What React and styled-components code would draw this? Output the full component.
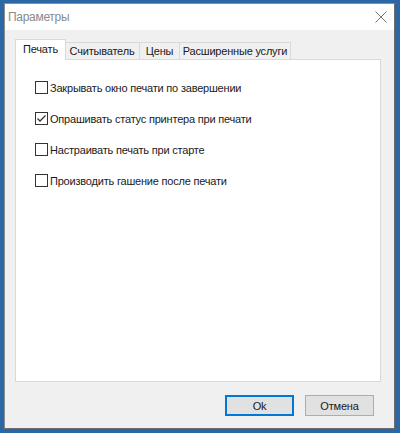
import React from "react";
import styled, { createGlobalStyle } from "styled-components";

const Global = createGlobalStyle`
  html, body {
    margin: 0;
    padding: 0;
    background: #2b67a4;
    font-family: "Liberation Sans", Arial, sans-serif;
  }
`;

const Desktop = styled.div`
  width: 400px;
  height: 433px;
  padding: 3px 5px 4px 4px;
  box-sizing: border-box;
`;

const Window = styled.div`
  height: 100%;
  display: flex;
  flex-direction: column;
  background: #f0f0f0;
  border: 1px solid #8c8c8c;
  border-right-color: #6d6d6d;
  border-bottom-color: #6d6d6d;
  box-sizing: border-box;
`;

const TitleBar = styled.div`
  height: 26px;
  flex: none;
  background: #fff;
  display: flex;
  align-items: center;
  justify-content: space-between;
  padding: 0 7px 0 3px;
`;

const Title = styled.span`
  font-size: 12px;
  letter-spacing: -0.3px;
  color: #8a8a8a;
`;

const Body = styled.div`
  flex: 1;
  display: flex;
  flex-direction: column;
  padding: 10px 13px 0 10px;
`;

const TabRow = styled.div`
  display: flex;
  align-items: flex-end;
  height: 20px;
  position: relative;
  z-index: 1;
`;

const Tab = styled.div`
  box-sizing: border-box;
  height: ${(p) => (p.active ? "21px" : "18px")};
  width: ${(p) => p.w}px;
  margin: ${(p) => (p.active ? "0 -1px 0 0" : "0 0 0 -1px")};
  background: ${(p) => (p.active ? "#fff" : "#f0f0f0")};
  border: 1px solid #d9d9d9;
  border-bottom: ${(p) => (p.active ? "none" : "1px solid #d9d9d9")};
  font-size: 11px;
  letter-spacing: -0.2px;
  color: #1a1a1a;
  display: flex;
  align-items: center;
  justify-content: center;
  padding-bottom: ${(p) => (p.active ? "2px" : "0")};
  white-space: nowrap;
  &:first-child {
    margin-left: 0;
    position: relative;
    z-index: 2;
  }
`;

const Panel = styled.div`
  height: 323px;
  margin-top: -1px;
  background: #fff;
  border: 1px solid #d9d9d9;
  display: flex;
  flex-direction: column;
  gap: 14px;
  padding: 19px 0 0 19px;
  box-sizing: border-box;
`;

const Row = styled.label`
  display: flex;
  align-items: center;
  gap: 2px;
  height: 17px;
  font-size: 11px;
  letter-spacing: -0.2px;
  color: #1a1a1a;
  white-space: nowrap;
`;

const Box = styled.span`
  width: 13px;
  height: 13px;
  box-sizing: border-box;
  border: 1px solid #333;
  background: #fff;
  display: flex;
  align-items: center;
  justify-content: center;
`;

const Footer = styled.div`
  display: flex;
  justify-content: flex-end;
  gap: 11px;
  padding: 13px 7px 0 0;
`;

const Button = styled.button`
  width: 69px;
  height: 21px;
  box-sizing: border-box;
  background: #e1e1e1;
  border: ${(p) => (p.primary ? "2px solid #0078d7" : "1px solid #adadad")};
  font-family: inherit;
  font-size: 11px;
  letter-spacing: -0.2px;
  color: #1a1a1a;
  padding: 0;
`;

const CheckBox = ({ checked }) => (
  <Box>
    {checked && (
      <svg width="11" height="11" viewBox="0 0 11 11">
        <path d="M1.5 5.5 L4 8 L9.5 2.5" fill="none" stroke="#333" strokeWidth="1.3" />
      </svg>
    )}
  </Box>
);

const options = [
  { text: "Закрывать окно печати по завершении", checked: false },
  { text: "Опрашивать статус принтера при печати", checked: true },
  { text: "Настраивать печать при старте", checked: false },
  { text: "Производить гашение после печати", checked: false }
];

const tabs = [
  { label: "Печать", w: 51, active: true },
  { label: "Считыватель", w: 76 },
  { label: "Цены", w: 41 },
  { label: "Расширенные услуги", w: 112 }
];

const App = () => {
  return (
    <Desktop>
      <Global />
      <Window>
        <TitleBar>
          <Title>Параметры</Title>
          <svg width="12" height="12" viewBox="0 0 12 12">
            <path d="M0.5 0.5 L11.5 11.5 M11.5 0.5 L0.5 11.5" stroke="#777" strokeWidth="1" />
          </svg>
        </TitleBar>
        <Body>
          <TabRow>
            {tabs.map((t) => (
              <Tab key={t.label} active={t.active} w={t.w}>
                {t.label}
              </Tab>
            ))}
          </TabRow>
          <Panel>
            {options.map((o) => (
              <Row key={o.text}>
                <CheckBox checked={o.checked} />
                {o.text}
              </Row>
            ))}
          </Panel>
          <Footer>
            <Button primary>Ok</Button>
            <Button>Отмена</Button>
          </Footer>
        </Body>
      </Window>
    </Desktop>
  );
};

export default App;
